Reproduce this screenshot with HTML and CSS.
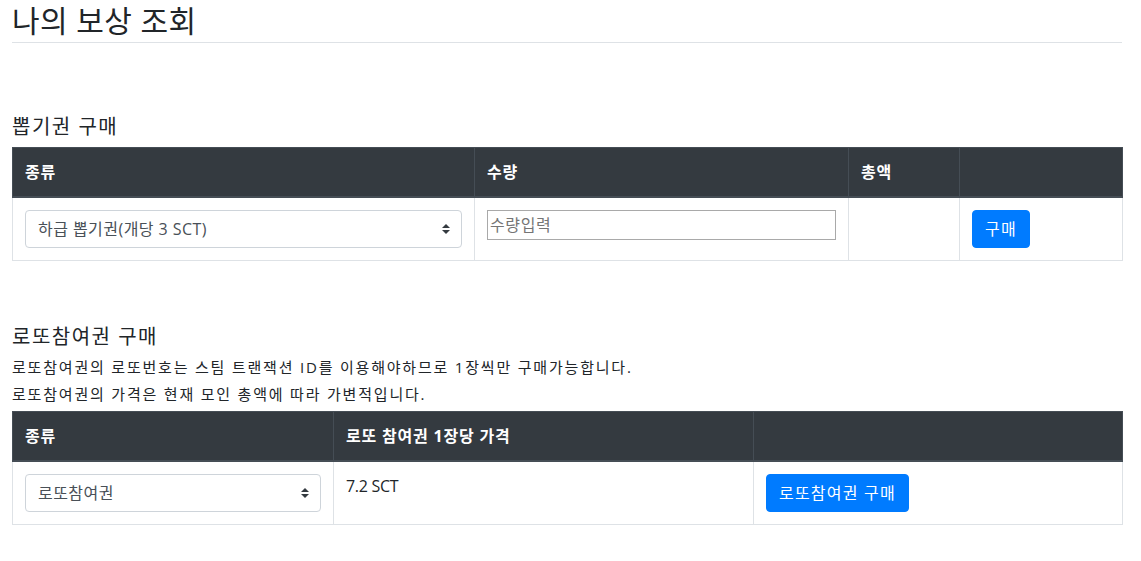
FILE: index.html
```html
<!DOCTYPE html>
<html lang="ko">
<head>
<meta charset="utf-8">
<title>나의 보상 조회</title>
<link rel="stylesheet" href="styles.css">
</head>
<body>
<div class="page">
  <h1 class="title">나의 보상 조회</h1>

  <section class="block block-first">
    <h5 class="block-title">뽑기권 구매</h5>
    <table class="tbl">
      <thead>
        <tr>
          <th class="c-kind1">종류</th>
          <th class="c-qty">수량</th>
          <th class="c-total">총액</th>
          <th class="c-act1"></th>
        </tr>
      </thead>
      <tbody>
        <tr>
          <td>
            <div class="select-wrap">
              <select class="select"><option>하급 뽑기권(개당 3 SCT)</option></select>
              <svg class="select-arrow" width="8" height="10" viewBox="0 0 4 5"><path d="M2 0L0 2h4zm0 5L0 3h4z" fill="#343a40"/></svg>
            </div>
          </td>
          <td><input class="qty" type="text" placeholder="수량입력"></td>
          <td></td>
          <td><button class="btn">구매</button></td>
        </tr>
      </tbody>
    </table>
  </section>

  <section class="block block-second">
    <h5 class="block-title">로또참여권 구매</h5>
    <p class="note">로또참여권의 로또번호는 스팀 트랜잭션 ID를 이용해야하므로 1장씩만 구매가능합니다.</p>
    <p class="note">로또참여권의 가격은 현재 모인 총액에 따라 가변적입니다.</p>
    <table class="tbl tbl-second">
      <thead>
        <tr>
          <th class="c-kind2">종류</th>
          <th class="c-price">로또 참여권 1장당 가격</th>
          <th class="c-act2"></th>
        </tr>
      </thead>
      <tbody>
        <tr>
          <td>
            <div class="select-wrap">
              <select class="select"><option>로또참여권</option></select>
              <svg class="select-arrow" width="8" height="10" viewBox="0 0 4 5"><path d="M2 0L0 2h4zm0 5L0 3h4z" fill="#343a40"/></svg>
            </div>
          </td>
          <td class="price">7.2 SCT</td>
          <td><button class="btn">로또참여권 구매</button></td>
        </tr>
      </tbody>
    </table>
  </section>
</div>
</body>
</html>
```

FILE: styles.css
```css
* { box-sizing: border-box; }

html, body {
  margin: 0;
  padding: 0;
  background: #fff;
}

body {
  font-family: "Open Sans", "Noto Sans CJK KR", sans-serif;
  font-size: 16px;
  line-height: 1.5;
  color: #212529;
}

.page {
  width: 1110px;
  margin-left: 12px;
}

.title {
  margin: 0;
  height: 43px;
  font-size: 30px;
  font-weight: 400;
  line-height: 42px;
  letter-spacing: 0.4px;
  border-bottom: 1px solid #dee2e6;
  color: #212529;
}

.block-title {
  margin: 0 0 8px;
  font-size: 20px;
  font-weight: 400;
  line-height: 24px;
  letter-spacing: 1.5px;
}

.block-first { margin-top: 72px; }
.block-second { margin-top: 64px; }
.block-second .block-title { margin-bottom: 5px; }

.note {
  margin: 0;
  font-size: 15px;
  line-height: 27px;
  letter-spacing: 1.8px;
}

.tbl-second { margin-top: 3px; }

.tbl {
  width: 1110px;
  border-collapse: collapse;
  table-layout: fixed;
  border: 1px solid #dee2e6;
}

.tbl th {
  background: #343a40;
  color: #fff;
  text-align: left;
  font-weight: 700;
  font-size: 16px;
  line-height: 24px;
  letter-spacing: 0.8px;
  padding: 12px;
  border: 1px solid #454d55;
  border-bottom: 2px solid #454d55;
  vertical-align: bottom;
}

.tbl td {
  padding: 12px;
  border: 1px solid #dee2e6;
  vertical-align: top;
  font-size: 16px;
  line-height: 24px;
}

.price { letter-spacing: -0.3px; }

.c-kind1 { width: 462px; }
.c-qty { width: 374px; }
.c-total { width: 111px; }
.c-act1 { width: 163px; }

.c-kind2 { width: 321px; }
.c-price { width: 420px; }
.c-act2 { width: 369px; }

.select-wrap {
  position: relative;
}

.select {
  display: block;
  width: 100%;
  height: 38px;
  padding: 6px 28px 6px 12px;
  font-family: inherit;
  font-size: 16px;
  line-height: 24px;
  letter-spacing: 0.45px;
  color: #495057;
  background: #fff;
  border: 1px solid #ced4da;
  border-radius: 4px;
  appearance: none;
  -webkit-appearance: none;
}

.select-arrow {
  position: absolute;
  right: 12px;
  top: 14px;
  pointer-events: none;
}

.qty {
  display: block;
  width: 349px;
  height: 30px;
  padding: 1px 2px;
  font-family: inherit;
  font-size: 16px;
  letter-spacing: 0.6px;
  border: 1px solid #a9a9a9;
  background: #fff;
  color: #212529;
}

.qty::placeholder { color: #757575; }

.btn {
  display: inline-block;
  height: 38px;
  padding: 6px 12px;
  font-family: inherit;
  font-size: 16px;
  line-height: 24px;
  letter-spacing: 1.2px;
  color: #fff;
  background: #007bff;
  border: 1px solid #007bff;
  border-radius: 4px;
}
```
